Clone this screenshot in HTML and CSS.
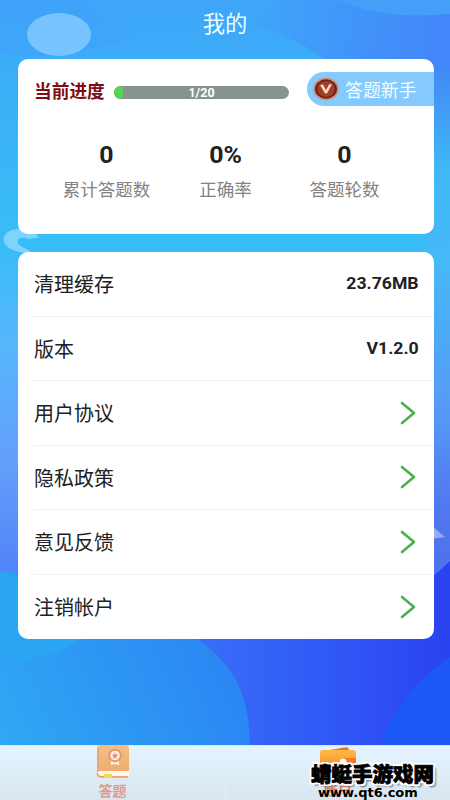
FILE: index.html
```
<!DOCTYPE html>
<html lang="zh-CN">
<head>
<meta charset="utf-8">
<title>我的</title>
<link rel="stylesheet" href="styles.css">
</head>
<body>
<div class="app">
  <svg class="backdrop" viewBox="0 0 450 800" preserveAspectRatio="none" aria-hidden="true">
    <defs>
      <linearGradient id="sky" x1="0" y1="0" x2="0" y2="1"><stop offset="0" stop-color="#3fa5f9"/><stop offset=".1" stop-color="#3baff7"/><stop offset=".31" stop-color="#38bdf6"/><stop offset=".43" stop-color="#58b6fb"/><stop offset=".58" stop-color="#629ffb"/><stop offset=".72" stop-color="#5282f8"/></linearGradient>
      <linearGradient id="right" x1="0" y1="0" x2="0" y2="1"><stop offset="0" stop-color="#4288f7"/><stop offset=".1" stop-color="#429ff7"/><stop offset=".2" stop-color="#3fb8f7"/><stop offset=".38" stop-color="#46b8f7"/><stop offset=".65" stop-color="#569cf8"/><stop offset=".85" stop-color="#5078ee"/><stop offset="1" stop-color="#4c70ee"/></linearGradient>
      <linearGradient id="top" gradientUnits="userSpaceOnUse" x1="225" y1="0" x2="450" y2="40"><stop offset="0" stop-color="#3faaf8"/><stop offset="1" stop-color="#4385fa"/></linearGradient>
      <linearGradient id="deep" x1="0" y1="0" x2="1" y2="0"><stop offset="0" stop-color="#3a70f8"/><stop offset=".55" stop-color="#3059f6"/><stop offset="1" stop-color="#2b42f1"/></linearGradient>
      <linearGradient id="hill" x1="0" y1="1" x2="1" y2=".6"><stop offset="0" stop-color="#30abf3"/><stop offset="1" stop-color="#2a86f3"/></linearGradient>
    </defs>
    <rect width="450" height="800" fill="url(#sky)"/>
    <path d="M0 0H85Q105 25 130 37Q80 60 0 54Z" fill="#42a0fb" opacity=".4"/>
    <path d="M242 22Q269 13 282 0H450V100H370Q310 35 242 22Z" fill="url(#top)"/>
    <path d="M338 0Q380 20 450 14V0Z" fill="#459ff8"/>
    <rect x="425" y="65" width="25" height="520" fill="url(#right)"/>
    <path d="M180 610L425 584L450 561V800H180Z" fill="url(#deep)"/>
    <path d="M0 571Q125 570 198 639C245 674 257 710 246 800H0Z" fill="url(#hill)"/>
    <path d="M0 571Q74 590 82 638Q45 665 0 659Z" fill="#29a5f2"/>
    <path d="M450 657Q398 690 378 750H450Z" fill="#1c58f5"/>
    <ellipse cx="59" cy="34.500" rx="32" ry="21.500" fill="#78c4ff"/>
    <path d="M39 237.500L35 233C28 228 8 226 4 237C1 246 14 252 26 253L30 256V251C25 248 18 246 17.500 241.500C18 236.500 25 237 28 239Z" fill="#7fd4fd"/>
    <path d="M432 526L445 537L432 539Z" fill="#91acf9"/>
  </svg>
  <header class="title">我的</header>
  <main>
    <section class="card summary">
      <div class="progress-row">
        <strong class="caption">当前进度</strong>
        <div class="progress"><i class="fill"></i><span>1/20</span></div>
        <div class="rank">
          <svg class="medal" viewBox="0 0 26 24"><ellipse cx="13" cy="12" rx="12.700" ry="11.200" fill="#d08c79"/><ellipse cx="13" cy="12" rx="11" ry="9.700" fill="#702117"/><ellipse cx="13" cy="12" rx="8.800" ry="8" fill="#9b402b"/><path d="M7 8L10 7.500L13 13L16 7.500L19 7L14 16.500H12Z" fill="#ffd8b9"/></svg>
          <span>答题新手</span>
        </div>
      </div>
      <div class="stats">
        <div class="stat"><b>0</b><span>累计答题数</span></div>
        <div class="stat"><b>0%</b><span>正确率</span></div>
        <div class="stat"><b>0</b><span>答题轮数</span></div>
      </div>
    </section>
    <section class="card menu">
      <div class="item"><span>清理缓存</span><b>23.76MB</b></div>
      <div class="item"><span>版本</span><b>V1.2.0</b></div>
      <div class="item"><span>用户协议</span><svg class="arrow" viewBox="0 0 16 24"><path d="M2 2L14 12L2 22"/></svg></div>
      <div class="item"><span>隐私政策</span><svg class="arrow" viewBox="0 0 16 24"><path d="M2 2L14 12L2 22"/></svg></div>
      <div class="item"><span>意见反馈</span><svg class="arrow" viewBox="0 0 16 24"><path d="M2 2L14 12L2 22"/></svg></div>
      <div class="item"><span>注销帐户</span><svg class="arrow" viewBox="0 0 16 24"><path d="M2 2L14 12L2 22"/></svg></div>
    </section>
  </main>
  <nav class="tabs">
    <div class="tab">
      <svg class="tab-icon" viewBox="0 0 36 36"><defs><linearGradient id="book" x2="0" y2="1"><stop stop-color="#f0c080"/><stop offset="1" stop-color="#f0aa6d"/></linearGradient></defs><rect x="2" y="1" width="32" height="32" rx="4" fill="url(#book)"/><path d="M3 4V28" stroke="#eba17c" stroke-width="2"/><path d="M5 27H34V32H5Q2 32 2 29.500Q2 27 5 27Z" fill="#fff5e9"/><path d="M2 29Q3 33 7 33H33" fill="none" stroke="#e99f71" stroke-width="1.500"/><path d="M9 30H17V34H9Z" fill="#f3dc55"/><circle cx="20" cy="11.500" r="5.800" fill="#fff1df" stroke="#e99277" stroke-width="2"/><path d="M20 8L21 10.500L23.500 10.800L21.500 12.500L22 15L20 13.700L18 15L18.500 12.500L16.500 10.800L19 10.500Z" fill="#e99277"/><path d="M16 17L20 18.500L24 17V21L20 20L16 21Z" fill="#fff1df"/></svg>
      <span>答题</span>
    </div>
    <div class="tab active">
      <svg class="tab-icon" viewBox="0 0 36 36"><defs><linearGradient id="wallet" x2="0" y2="1"><stop stop-color="#ffb944"/><stop offset="1" stop-color="#f47b20"/></linearGradient></defs><path d="M4 7L27 3L32 9Z" fill="#ed7426"/><rect x="0" y="6" width="36" height="27" rx="3" fill="url(#wallet)"/><path d="M36 14H24Q18 14 18 20T24 26H36Z" fill="#f77928"/><circle cx="23" cy="18" r="3.500" fill="#fff"/></svg>
      <span>账户</span>
    </div>
  </nav>
  <div class="watermark"><div class="mark-name">蜻蜓手游戏网</div><div class="mark-url">www.qt6.com</div></div>
</div>
</body>
</html>
```
FILE: styles.css
```
* { box-sizing: border-box; }
body { margin: 0; font-family: Roboto, "Noto Sans CJK SC", sans-serif; color: #202124; }
.app { position: relative; width: 450px; height: 800px; overflow: hidden; display: flex; flex-direction: column; isolation: isolate; }
.backdrop { position: absolute; inset: 0; width: 450px; height: 800px; z-index: -1; }
.title { height: 59px; padding-top: 9px; text-align: center; color: #edfbff; font-size: 22.300px; line-height: 30px; }
main { flex: 1; padding: 0 16px 0 18px; }
.card { background: #fff; border-radius: 10px; overflow: hidden; }
.summary { height: 175px; margin-bottom: 18px; }
.progress-row { display: flex; align-items: center; height: 60px; padding: 7px 0 7px 16px; }
.caption { width: 80px; color: #820c13; font-size: 17.700px; line-height: 26px; font-weight: 700; padding-top: 6px; }
.progress { position: relative; width: 175px; height: 13px; margin-top: 7px; background: #87938d; border-radius: 7px; overflow: hidden; display: flex; justify-content: center; align-items: center; color: #fff; font-size: 12.500px; font-weight: 700; }
.fill { position: absolute; left: 0; top: 0; width: 9px; height: 13px; background: #55d553; border-radius: 7px; }
.rank { margin-left: auto; width: 127px; height: 34px; background: #85cafe; color: #f6fdff; border-radius: 17px 0 0 17px; display: flex; align-items: center; font-size: 17.900px; }
.rank span { margin-top: -1px; }
.medal { width: 26px; height: 24px; margin: 0 6px; }
.stats { display: flex; padding-left: 29px; }
.stat { width: 119px; text-align: center; display: flex; flex-direction: column; }
.stat b { height: 37px; line-height: 72px; font-size: 23.500px; transform: scaleX(1.06); }
.stat span { margin-top: 20px; font-size: 17.500px; color: #828282; line-height: 28px; }
.menu { height: 387px; }
.item { height: 64.500px; margin-left: 15px; padding: 0 15px 0 1px; display: flex; align-items: center; justify-content: space-between; border-bottom: 1.500px solid #eff0f1; font-size: 20px; }
.item:last-child { border-bottom: 0; }
.item b { font-size: 16.500px; transform: scaleX(1.07); transform-origin: right; }
.arrow { width: 16px; height: 24px; margin-right: 3px; fill: none; stroke: #4caf50; stroke-width: 2.600; stroke-linecap: round; stroke-linejoin: round; }
.tabs { height: 55px; display: flex; background: linear-gradient(#e4f4ff, #d9e6ef); border-top: 1px solid #c8edff; }
.tab { width: 50%; display: flex; flex-direction: column; align-items: center; color: #df9c89; font-size: 14px; font-weight: 700; }
.tab + .tab { border-left: 1px solid #e4edf5; }
.tab-icon { width: 36px; height: 36px; margin-top: -2px; flex: none; }
.tab span { line-height: 20px; }
.tab:first-child span { margin-top: 1px; }
.active { color: #ed7751; }
.watermark { position: absolute; left: 311px; top: 764px; width: 126px; color: #000; }
.mark-name { font-size: 20.500px; line-height: 22px; font-weight: 900; white-space: nowrap; -webkit-text-stroke: .8px #000; text-shadow: -2px 0 #fff, 2px 0 #fff, 0 -2px #fff, 0 2px #fff, -2px -2px #fff, 2px -2px #fff, -2px 2px #fff, 2px 2px #fff, 3px 3px 2px #667; }
.mark-url { font: 700 13px/14px "DejaVu Sans", sans-serif; margin-left: 7px; white-space: nowrap; }
```
